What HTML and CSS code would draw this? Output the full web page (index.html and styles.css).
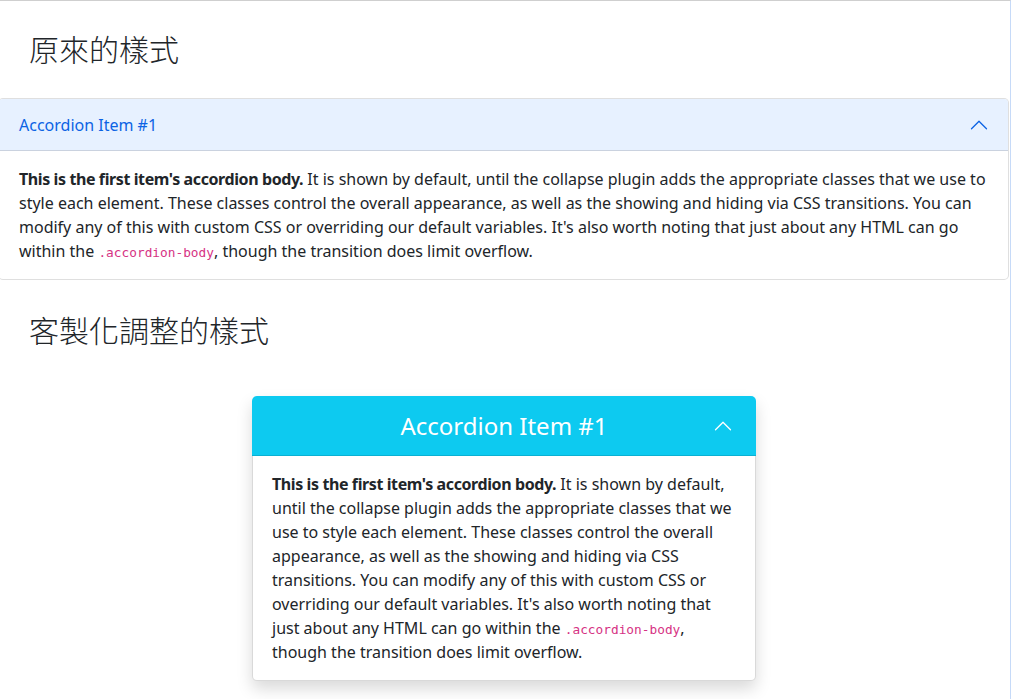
FILE: index.html
```html
<!DOCTYPE html>
<html lang="zh-Hant">
<head>
<meta charset="utf-8">
<title>Accordion</title>
<link rel="stylesheet" href="styles.css">
</head>
<body>
<div class="frame">
  <h2 class="title title-first">原來的樣式</h2>
  <div class="accordion">
    <div class="acc-header">
      <span class="acc-title">Accordion Item #1</span>
      <svg class="chev" viewBox="0 0 16 16" width="20" height="20"><path fill="currentColor" d="M1.646 4.646a.5.5 0 0 1 .708 0L8 10.293l5.646-5.647a.5.5 0 0 1 .708.708l-6 6a.5.5 0 0 1-.708 0l-6-6a.5.5 0 0 1 0-.708z" transform="rotate(180 8 8)"/></svg>
    </div>
    <div class="acc-body">
      <strong>This is the first item's accordion body.</strong> It is shown by default, until the collapse plugin adds the appropriate classes that we use to style each element. These classes control the overall appearance, as well as the showing and hiding via CSS transitions. You can modify any of this with custom CSS or overriding our default variables. It's also worth noting that just about any HTML can go within the <code>.accordion-body</code>, though the transition does limit overflow.
    </div>
  </div>

  <h2 class="title title-second">客製化調整的樣式</h2>
  <div class="custom-wrap">
    <div class="custom">
      <div class="custom-header">
        <span class="custom-title">Accordion Item #1</span>
        <svg class="custom-chev" viewBox="0 0 16 16" width="20" height="20"><path fill="currentColor" d="M1.646 4.646a.5.5 0 0 1 .708 0L8 10.293l5.646-5.647a.5.5 0 0 1 .708.708l-6 6a.5.5 0 0 1-.708 0l-6-6a.5.5 0 0 1 0-.708z" transform="rotate(180 8 8)"/></svg>
      </div>
      <div class="custom-body">
        <strong>This is the first item's accordion body.</strong> It is shown by default, until the collapse plugin adds the appropriate classes that we use to style each element. These classes control the overall appearance, as well as the showing and hiding via CSS transitions. You can modify any of this with custom CSS or overriding our default variables. It's also worth noting that just about any HTML can go within the <code>.accordion-body</code>, though the transition does limit overflow.
      </div>
    </div>
  </div>
</div>
</body>
</html>
```
FILE: styles.css
```css
* { box-sizing: border-box; }
html, body { margin: 0; padding: 0; background: #fff; }
body {
  font-family: "Noto Sans", "Noto Sans CJK TC", sans-serif;
  font-size: 16px;
  line-height: 1.5;
  color: #212529;
}
.frame {
  border-top: 1px solid #cfcfcf;
  border-right: 1px solid #c6daf8;
  min-height: 699px;
  overflow: hidden;
}
.title {
  font-family: "Noto Sans CJK TC", "Noto Sans", sans-serif;
  font-weight: 300;
  font-size: 30px;
  line-height: 36px;
  margin: 0;
  padding-left: 29px;
  color: #212529;
}
.title-first { margin-top: 29px; margin-bottom: 32px; }
.title-second { margin-top: 31px; margin-bottom: 49px; }

.accordion {
  margin-left: -2px;
  margin-right: 1px;
  border: 1px solid rgba(0,0,0,.125);
  border-radius: 5px;
  background: #fff;
}
.acc-header {
  display: flex;
  align-items: center;
  padding: 14px 19px 14px 20px;
  line-height: 24px;
  background: #e7f1ff;
  color: #0c63e4;
  box-shadow: inset 0 -1px 0 rgba(0,0,0,.125);
  border-radius: 4px 4px 0 0;
}
.acc-title { flex: 1; }
.chev { display: block; flex-shrink: 0; color: #0c63e4; }
.acc-body {
  padding: 16px 20px;
}
strong { font-weight: 700; letter-spacing: -0.4px; }
code {
  font-family: "DejaVu Sans Mono", "Liberation Mono", monospace;
  font-size: 12.8px;
  line-height: 1;
  color: #d63384;
}

.custom-wrap {
  display: flex;
  justify-content: center;
  padding-right: 2px;
}
.custom {
  width: 504px;
  border-radius: 5px;
  box-shadow: 0 8px 16px rgba(0,0,0,.15);
  background: #fff;
}
.custom-header {
  position: relative;
  height: 60px;
  display: flex;
  align-items: center;
  justify-content: center;
  background: #0dcaf0;
  color: #fff;
  font-size: 24px;
  line-height: 36px;
  border-radius: 5px 5px 0 0;
  box-shadow: inset 0 -1px 0 rgba(0,0,0,.125);
}
.custom-chev {
  position: absolute;
  right: 23px;
  top: 20px;
  color: #fff;
}
.custom-body {
  padding: 16px 20px 16px 19px;
  border: 1px solid rgba(0,0,0,.15);
  border-top: 0;
  border-radius: 0 0 5px 5px;
}
```
